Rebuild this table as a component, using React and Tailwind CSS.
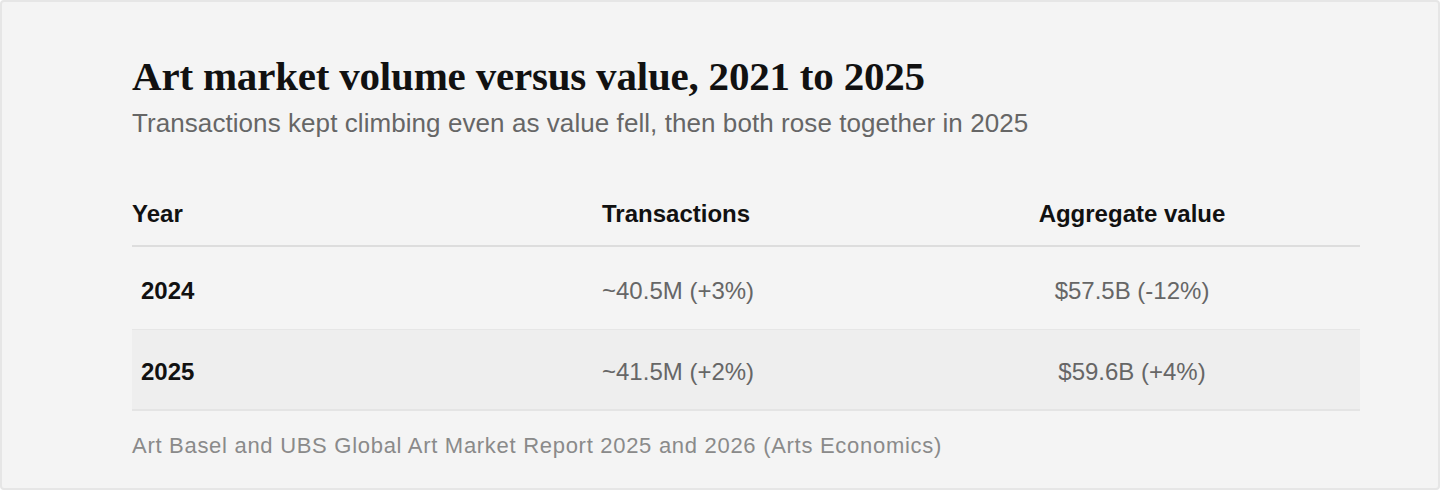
import React from "react";

const rows = [
  { year: "2024", tx: "~40.5M (+3%)", value: "$57.5B (-12%)", shade: false },
  { year: "2025", tx: "~41.5M (+2%)", value: "$59.6B (+4%)", shade: true },
];

export default function App() {
  return (
    <div className="w-[1440px] h-[490px] bg-white">
      <div className="w-full h-full bg-[#f4f4f4] border-2 border-[#e6e6e6] rounded-[4px] pl-[130px] pt-[50px] font-['Liberation_Sans',Arial,sans-serif]">
        <h1 className="font-['Liberation_Serif','Times_New_Roman',serif] font-bold text-[41px] leading-[48px] text-[#111111] tracking-[-0.2px]">
          Art market volume versus value, 2021 to 2025
        </h1>
        <p className="mt-[7px] text-[26px] leading-[32px] tracking-[0.07px] text-[#666666]">
          Transactions kept climbing even as value fell, then both rose together in 2025
        </p>

        <div className="mt-[59px] w-[1228px]">
          <div className="grid grid-cols-[470px_302px_456px] border-b-2 border-[#dddddd] pb-[15px] text-[24px] leading-[32px] font-bold text-[#111111]">
            <div>Year</div>
            <div>Transactions</div>
            <div className="text-center">Aggregate value</div>
          </div>
          {rows.map((r) => (
            <div
              key={r.year}
              className={
                r.shade
                  ? "grid grid-cols-[470px_302px_456px] bg-[#eeeeee] border-t border-[#e6e6e6] border-b-2 border-b-[#e4e4e4] pt-[26px] pb-[21px] text-[24px] leading-[32px]"
                  : "grid grid-cols-[470px_302px_456px] pt-[28px] pb-[22px] text-[24px] leading-[32px]"
              }
            >
              <div className="pl-[9px] font-bold text-[#111111]">{r.year}</div>
              <div className="text-[#666666]">{r.tx}</div>
              <div className="text-center text-[#666666]">{r.value}</div>
            </div>
          ))}
        </div>

        <p className="mt-[21px] text-[22px] leading-[28px] tracking-[0.71px] text-[#8a8a8a]">
          Art Basel and UBS Global Art Market Report 2025 and 2026 (Arts Economics)
        </p>
      </div>
    </div>
  );
}
